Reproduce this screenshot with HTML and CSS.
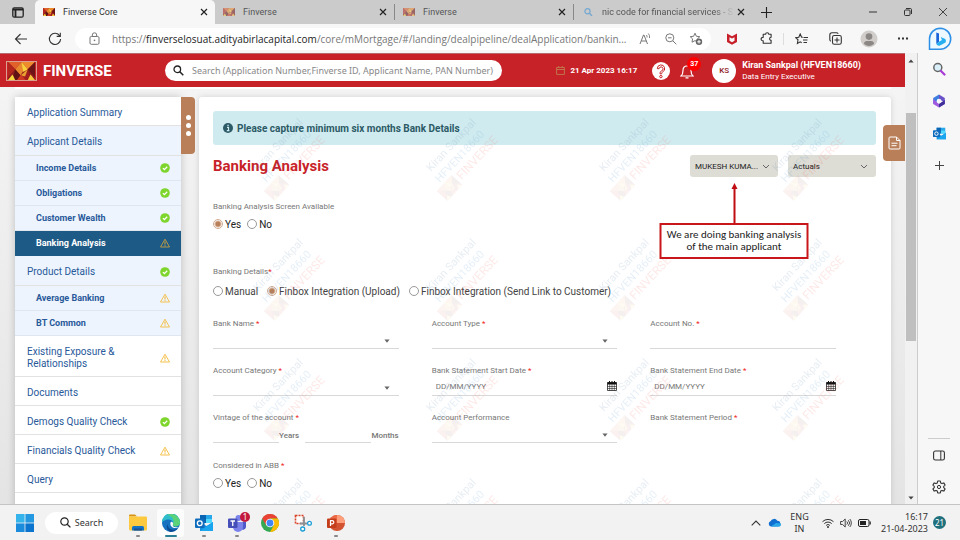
FILE: index.html
```html
<!DOCTYPE html>
<html lang="en">
<head>
<meta charset="utf-8">
<meta name="viewport" content="width=device-width, initial-scale=1">
<title>Finverse Core</title>
<link rel="stylesheet" href="styles.css">
</head>
<body>
<svg class="defs" width="0" height="0" aria-hidden="true">
  <defs>
    <symbol id="logo" viewBox="0 0 30 20">
      <rect width="30" height="20" fill="#8e1b1c"/>
      <path d="M0 0h15l-7 8z" fill="#e2602a"/><path d="M15 0h15l-8 8z" fill="#ef8a2c"/>
      <path d="M0 0l8 8-8 9z" fill="#b3261e"/><path d="M30 0l-8 8 8 9z" fill="#6d1416"/>
      <path d="M8 8l7-8 3 8-4 7z" fill="#e8892f"/><path d="M15 0l7 8-5 3z" fill="#f7d23c"/>
      <path d="M8 8l6 7-4 5H5z" fill="#5f1113"/><path d="M22 8l-7 7 4 5h6z" fill="#a31d1f"/>
      <path d="M14 15l8-7-3 8z" fill="#e8a02e"/><path d="M10 20l4.500-6 5 6z" fill="#cf3b22"/>
      <path d="M0 20l5-6 3 6z" fill="#f6d63d"/><path d="M30 20l-5-6-3 6z" fill="#f6c83d"/>
    </symbol>
    <symbol id="ok" viewBox="0 0 10 10"><circle cx="5" cy="5" r="4.800" fill="#7ed52c"/><path d="M2.900 5.100l1.500 1.500 2.800-2.900" fill="none" stroke="#fff" stroke-width="1.300"/></symbol>
    <symbol id="warn" viewBox="0 0 10 10"><path d="M5 1.200L9.500 9H.5z" fill="none" stroke="currentColor" stroke-width=".9" stroke-linejoin="round"/><path d="M5 3.400v3.200M5 7.200v1.100" stroke="currentColor" stroke-width="1.100"/></symbol>
    <symbol id="x" viewBox="0 0 8 8"><path d="M1 1l6 6M7 1L1 7" stroke="currentColor" stroke-width="1.200"/></symbol>
    <symbol id="caret" viewBox="0 0 6 4"><path d="M.4.400h5.200L3 3.800z" fill="#666"/></symbol>
    <symbol id="chev" viewBox="0 0 8 5"><path d="M1 1l3 3 3-3" fill="none" stroke="#666" stroke-width="1"/></symbol>
    <symbol id="cal" viewBox="0 0 10 10"><path d="M.5 1.500h9V9.500h-9z" fill="#fff" stroke="#222" stroke-width=".8"/><path d="M.5 1.300h9v2.200h-9z" fill="#111"/><path d="M2.500 0v2M5 0v2M7.500 0v2" stroke="#111" stroke-width="1"/><path d="M.5 5.500h9M.5 7.500h9M2.700 3v6.500M5 3v6.500M7.300 3v6.500" stroke="#222" stroke-width=".6"/></symbol>
    <symbol id="outlook" viewBox="0 0 18 18"><path d="M5 1h12v8H5z" fill="#28a8ea"/><path d="M5 1h6v8H5z" fill="#0a64b4"/><path d="M11 5h6v4h-6z" fill="#50d9ff"/><path d="M5 8l6.500 4L18 8v9H5z" fill="#1490df"/><path d="M5 17l13-9v9z" fill="#1aa6ee"/><rect y="4.500" width="9.500" height="9.500" rx="1" fill="#0f6cbd"/><circle cx="4.750" cy="9.250" r="2.400" fill="none" stroke="#fff" stroke-width="1.300"/></symbol>
  </defs>
</svg>

<header class="tabbar">
  <button class="tab-actions" aria-label="Tab actions"><svg width="12" height="11" viewBox="0 0 12 11"><rect x=".8" y=".8" width="10.400" height="9.400" rx="1.500" fill="none" stroke="#222" stroke-width="1.300"/><path d="M1 2.500h10M3.500 3v7" stroke="#222" stroke-width="1.800"/></svg></button>
  <div class="tab tab-active"><svg class="fav"><use href="#logo"/></svg><span class="tab-title">Finverse Core</span><button class="tab-close" aria-label="Close tab"><svg><use href="#x"/></svg></button></div>
  <div class="tab"><svg class="fav"><use href="#logo"/></svg><span class="tab-title">Finverse</span><button class="tab-close" aria-label="Close tab"><svg><use href="#x"/></svg></button></div>
  <div class="tab tab-sep"><svg class="fav"><use href="#logo"/></svg><span class="tab-title">Finverse</span><button class="tab-close" aria-label="Close tab"><svg><use href="#x"/></svg></button></div>
  <div class="tab tab-sep"><svg class="fav" viewBox="0 0 12 8"><circle cx="5.500" cy="3.300" r="2.600" fill="none" stroke="#2b8bd8" stroke-width="1.200"/><path d="M7.500 5.300L10 8" stroke="#2b8bd8" stroke-width="1.400"/></svg><span class="tab-title tab-fade">nic code for financial services - S</span><button class="tab-close" aria-label="Close tab"><svg><use href="#x"/></svg></button></div>
  <button class="tab-new" aria-label="New tab"><svg width="11" height="11" viewBox="0 0 11 11"><path d="M5.500 0v11M0 5.500h11" stroke="#222" stroke-width="1.100"/></svg></button>
  <div class="window-buttons">
    <button aria-label="Minimize"><svg width="8" height="8" viewBox="0 0 8 8"><path d="M0 4h8" stroke="#333"/></svg></button>
    <button aria-label="Restore"><svg width="8" height="8" viewBox="0 0 8 8"><rect x=".5" y="2" width="5.500" height="5.500" rx="1" fill="none" stroke="#333"/><path d="M2 .5h4.300a1.200 1.200 0 0 1 1.200 1.200V6" fill="none" stroke="#333"/></svg></button>
    <button aria-label="Close window"><svg width="8" height="8" viewBox="0 0 8 8"><path d="M0 0l8 8M8 0L0 8" stroke="#333" stroke-width=".9"/></svg></button>
  </div>
</header>

<div class="toolbar">
  <button class="tool" aria-label="Back"><svg width="14" height="12" viewBox="0 0 14 12"><path d="M13 6H1.500M6.500 1l-5 5 5 5" fill="none" stroke="#333" stroke-width="1.100"/></svg></button>
  <button class="tool" aria-label="Refresh"><svg width="14" height="14" viewBox="0 0 14 14"><path d="M11.800 4A5.600 5.600 0 1 0 12.600 7M12.300.8v3.600H8.700" fill="none" stroke="#333" stroke-width="1.100"/></svg></button>
  <div class="address">
    <svg width="11" height="13" viewBox="0 0 11 13"><rect x="1" y="4.500" width="9" height="7.800" rx="1.300" fill="none" stroke="#777"/><path d="M3.300 4.500V3a2.200 2.200 0 0 1 4.400 0v1.500" fill="none" stroke="#777"/><circle cx="5.500" cy="8.400" r=".8" fill="#777"/></svg>
    <div class="url" role="textbox" contenteditable="true" spellcheck="false" aria-label="Address">https://<b>finverselosuat.adityabirlacapital.com</b>/core/mMortgage/#/landing/dealpipeline/dealApplication/bankin...</div>
    <button aria-label="Read aloud"><svg width="14" height="12" viewBox="0 0 14 12"><path d="M1 11L4.500 2h.5l3.500 9M2.300 8h5" fill="none" stroke="#777"/><path d="M8 4.500a3 3 0 0 0-.5-2.500M10.500 5a5 5 0 0 0-1.200-4.500" fill="none" stroke="#777" stroke-width=".9"/></svg></button>
    <button aria-label="Zoom out"><svg width="12" height="12" viewBox="0 0 12 12"><circle cx="4.800" cy="4.800" r="4" fill="none" stroke="#777"/><path d="M7.800 7.800l3.500 3.500M3 4.800h3.600" stroke="#777"/></svg></button>
    <button aria-label="Add to favorites"><svg width="14" height="14" viewBox="0 0 14 14"><path d="M6 1.200l1.400 3.100 3.400.4-2.500 2.200.6 3.300L6 8.600l-3 1.600.6-3.300L1.200 4.700l3.400-.4z" fill="none" stroke="#777"/><circle cx="10" cy="9.800" r="3.200" fill="#666"/><path d="M10 8v3.600M8.200 9.800h3.600" stroke="#fff"/></svg></button>
  </div>
  <button class="tool" aria-label="McAfee"><svg width="12" height="12" viewBox="0 0 12 12"><path d="M1 .5l5 2.800L11 .5v8.500L6 11.800 1 9z" fill="#c8202a"/><path d="M3.500 4.200L6 5.600l2.500-1.400v3.600L6 9.200 3.500 7.800z" fill="#f7f7f7"/></svg></button>
  <button class="tool" aria-label="Extensions"><svg width="13" height="13" viewBox="0 0 13 13"><path d="M4 2.300h1.600a1.600 1.600 0 0 1 3.200 0h2.300v3a1.500 1.500 0 0 0 0 3v3H3.200V8.700a1.700 1.700 0 1 1 0-3.300V2.300z" fill="none" stroke="#333" stroke-width="1.100" stroke-linejoin="round"/></svg></button>
  <span class="tool-divider"></span>
  <button class="tool" aria-label="Favorites"><svg width="13" height="12" viewBox="0 0 13 12"><path d="M7.800 4.300l-1.200-.1L5.200 1 3.800 4.200.7 4.600 3 6.800l-.6 3.600 2.800-1.600 1.500.9M8.500 4.500H13M8 7h4.500M8.500 9.500h3.500" fill="none" stroke="#333" stroke-width="1.100"/></svg></button>
  <button class="tool" aria-label="Collections"><svg width="13" height="13" viewBox="0 0 13 13"><rect x="3.500" y="3.500" width="8.800" height="8.800" rx="1.800" fill="none" stroke="#333" stroke-width="1.100"/><path d="M1.800 9.300A2 2 0 0 1 .8 7.500V3A2.200 2.200 0 0 1 3 .8h4.500a2 2 0 0 1 1.700 1M8 5.500v5M5.500 8h5" fill="none" stroke="#333" stroke-width="1.100"/></svg></button>
  <button class="tool" aria-label="Profile"><svg width="18" height="18" viewBox="0 0 18 18"><circle cx="9" cy="9" r="8.500" fill="#d0cdca"/><circle cx="9" cy="6.600" r="3.300" fill="#8a8785"/><path d="M4 14q0-3 3-3h4q3 0 3 3a8 8 0 0 1-10 0z" fill="#8a8785"/></svg></button>
  <button class="tool" aria-label="Settings and more"><svg width="10" height="3" viewBox="0 0 10 3"><path d="M0 .6h2v2H0zM4 .6h2v2H4zM8 .6h2v2H8z" fill="#333"/></svg></button>
  <button class="tool tool-bing" aria-label="Bing"><svg width="24" height="24" viewBox="0 0 24 24"><path d="M12.300 1.200A10.500 10.500 0 1 1 12 22.300H1.500V12A10.800 10.800 0 0 1 12.300 1.200z" fill="#eef8ff" stroke="#2d8fe6" stroke-width="1.500"/><path d="M8.300 5.500l2.700 1v8.200l-2.700 2.300z" fill="#1b63d8"/><path d="M8.300 17l2.700-2.300 3-1.700-1.300-2.900 4.600 2a3 3 0 0 1 .2 3.400l-6 3.200a3 3 0 0 1-3.200-1.700z" fill="#25aef0"/></svg></button>
</div>

<div class="middle">
  <div class="app">
    <header class="app-header">
      <a class="brand" href="#"><svg class="brand-logo"><use href="#logo"/></svg>FINVERSE</a>
      <label class="search"><svg width="11" height="11" viewBox="0 0 11 11"><circle cx="4.300" cy="4.300" r="3.300" fill="none" stroke="#222" stroke-width="1.300"/><path d="M6.800 6.800L10.300 10.300" stroke="#222" stroke-width="1.500"/></svg><input type="text" aria-label="Search" placeholder="Search (Application Number,Finverse ID, Applicant Name, PAN Number)"></label>
      <div class="date"><svg width="9" height="9" viewBox="0 0 9 9"><path d="M.6 1.500h7.800v6.900H.6zM.6 3.500h7.800M2.700 0v2M6.300 0v2" fill="none" stroke="#c0744c" stroke-width="1"/></svg><time>21 Apr 2023 16:17</time></div>
      <button class="help" aria-label="Help"><svg width="18" height="18" viewBox="0 0 18 18"><circle cx="9" cy="9" r="9" fill="#fff"/><path d="M5.300 6.700a3.700 3.700 0 1 1 5.200 3.300c-.8.500-.8.900-.8 1.800H8c0-1.500.3-2.200 1.400-2.900a2 2 0 1 0-2.300-2.200z" fill="#fff" stroke="#c82229" stroke-width="1"/><circle cx="8.900" cy="14.600" r="1.200" fill="#fff" stroke="#c82229"/></svg></button>
      <button class="bell" aria-label="Notifications"><svg width="14" height="16" viewBox="0 0 14 16"><path d="M1 13h12c-1.500-1.300-2-2.500-2-5.500C11 4.500 9.500 3 7 3S3 4.500 3 7.500C3 10.500 2.500 11.700 1 13zM5.500 14.800h3" fill="none" stroke="#fff" stroke-width="1.200"/></svg><span class="bell-count">37</span></button>
      <div class="avatar">KS</div>
      <div class="user"><span class="user-name">Kiran Sankpal (HFVEN18660)</span><span class="user-role">Data Entry Executive</span></div>
    </header>

    <div class="app-body">
      <nav class="steps" aria-label="Application sections">
        <a class="step" href="#">Application Summary</a>
        <a class="step step-tint" href="#">Applicant Details</a>
        <div class="substeps">
          <a class="substep" href="#">Income Details<svg><use href="#ok"/></svg></a>
          <a class="substep" href="#">Obligations<svg><use href="#ok"/></svg></a>
          <a class="substep" href="#">Customer Wealth<svg><use href="#ok"/></svg></a>
          <a class="substep substep-active" href="#" aria-current="page">Banking Analysis<svg><use href="#warn"/></svg></a>
        </div>
        <a class="step step-tint" href="#">Product Details<svg><use href="#ok"/></svg></a>
        <div class="substeps">
          <a class="substep" href="#">Average Banking<svg><use href="#warn"/></svg></a>
          <a class="substep" href="#">BT Common<svg><use href="#warn"/></svg></a>
        </div>
        <a class="step step-tall" href="#"><span>Existing Exposure &amp;<br>Relationships</span><svg><use href="#warn"/></svg></a>
        <a class="step" href="#">Documents</a>
        <a class="step" href="#">Demogs Quality Check<svg><use href="#ok"/></svg></a>
        <a class="step" href="#">Financials Quality Check<svg><use href="#warn"/></svg></a>
        <a class="step" href="#">Query</a>
        <span class="step"></span>
      </nav>
      <button class="steps-toggle" aria-label="Toggle sections"><i></i><i></i><i></i></button>

      <main class="panel">
        <p class="notice"><svg width="10" height="10" viewBox="0 0 10 10"><circle cx="5" cy="5" r="5" fill="#2c5a66"/><path d="M4 4.300h1.500V7.500M3.800 7.600h2.600M4.400 2.400h1.300" stroke="#d0ebef" stroke-width="1.200" fill="none"/></svg>Please capture minimum six months Bank Details</p>
        <div class="panel-head">
          <h1>Banking Analysis</h1>
          <div class="pill"><select aria-label="Applicant"><option>MUKESH KUMA...</option></select><svg><use href="#chev"/></svg>
            <div class="callout"><svg width="10" height="40" viewBox="0 0 10 40"><path d="M5 4v36" stroke="#c00d12" stroke-width="2"/><path d="M5 0l3 6H2z" fill="#c00d12"/></svg><p>We are doing banking analysis<br>of the main applicant</p></div>
          </div>
          <div class="pill"><select aria-label="Figures"><option>Actuals</option></select><svg><use href="#chev"/></svg></div>
        </div>

        <form>
          <fieldset class="choice">
            <legend>Banking Analysis Screen Available</legend>
            <div class="options"><label class="dark"><input type="radio" name="screen" checked>Yes</label><label class="dark"><input type="radio" name="screen">No</label></div>
          </fieldset>
          <fieldset class="choice choice-wide">
            <legend>Banking Details<em>*</em></legend>
            <div class="options"><label><input type="radio" name="details">Manual</label><label><input type="radio" name="details" checked>Finbox Integration (Upload)</label><label><input type="radio" name="details">Finbox Integration (Send Link to Customer)</label></div>
          </fieldset>
          <div class="fields">
            <div class="field"><label for="bank">Bank Name <em>*</em></label><div class="control"><select id="bank"><option></option></select><svg class="caret"><use href="#caret"/></svg></div></div>
            <div class="field"><label for="type">Account Type <em>*</em></label><div class="control"><select id="type"><option></option></select><svg class="caret"><use href="#caret"/></svg></div></div>
            <div class="field"><label for="number">Account No. <em>*</em></label><div class="control"><input id="number" type="text"></div></div>
            <div class="field"><label for="category">Account Category <em>*</em></label><div class="control"><select id="category"><option></option></select><svg class="caret"><use href="#caret"/></svg></div></div>
            <div class="field"><label for="start">Bank Statement Start Date <em>*</em></label><div class="control"><input id="start" type="text" placeholder="DD/MM/YYYY"><svg class="cal"><use href="#cal"/></svg></div></div>
            <div class="field"><label for="end">Bank Statement End Date <em>*</em></label><div class="control"><input id="end" type="text" placeholder="DD/MM/YYYY"><svg class="cal"><use href="#cal"/></svg></div></div>
            <div class="field"><label for="years">Vintage of the account <em>*</em></label><div class="pair"><input id="years" type="text"><span>Years</span><input id="months" type="text" aria-label="Months"><span>Months</span></div></div>
            <div class="field"><label for="performance">Account Performance</label><div class="control"><select id="performance"><option></option></select><svg class="caret"><use href="#caret"/></svg></div></div>
            <div class="field"><span>Bank Statement Period <em>*</em></span></div>
          </div>
          <fieldset class="choice choice-last">
            <legend>Considered in ABB <em>*</em></legend>
            <div class="options"><label class="dark"><input type="radio" name="abb">Yes</label><label class="dark"><input type="radio" name="abb">No</label></div>
          </fieldset>
        </form>
        <svg class="watermark" width="100%" height="100%" aria-hidden="true">
          <defs>
            <pattern id="mark" x="38" y="14" width="173" height="120" patternUnits="userSpaceOnUse">
              <g transform="translate(21 61) rotate(-47)" font-size="11">
                <text fill="#3d6f9f">Kiran Sankpal</text>
                <text x="-2" y="14" fill="#2c7fc4">HFVEN18660</text>
                <use href="#logo" x="-10" y="17" width="22" height="15" opacity=".5"/>
                <text x="15" y="28" font-size="12" fill="#ef4a3c">FINVERSE</text>
              </g>
            </pattern>
          </defs>
          <rect width="100%" height="100%" fill="url(#mark)"/>
        </svg>
      </main>
      <button class="notes" aria-label="Notes"><svg width="13" height="14" viewBox="0 0 13 14"><path d="M2 1h6.500L12 4.500V12a1 1 0 0 1-1 1H2a1 1 0 0 1-1-1V2a1 1 0 0 1 1-1zM8.500 1v3.500H12M3.500 7.200h6M3.500 9.700h5" fill="none" stroke="#fff" stroke-width="1"/></svg></button>
    </div>
  </div>

  <div class="scrollbar" aria-hidden="true"><svg width="6" height="4" viewBox="0 0 6 4"><path d="M3 .5L5.600 3.500H.4z" fill="#444"/></svg><span class="thumb"></span><svg width="6" height="4" viewBox="0 0 6 4"><path d="M3 3.500L5.600.5H.4z" fill="#444"/></svg></div>

  <aside class="edgebar">
    <button aria-label="Search"><svg width="14" height="14" viewBox="0 0 14 14"><circle cx="5.800" cy="5.500" r="4" fill="#d9f0fb" stroke="#666" stroke-width="1.500"/><path d="M9 9l3.500 3.500" stroke="#a63bd6" stroke-width="2.200" stroke-linecap="round"/></svg></button>
    <button aria-label="Microsoft 365"><svg width="14" height="14" viewBox="0 0 14 14"><path d="M7 .5L1.200 4v6L7 6z" fill="#3f7ee0"/><path d="M7 .5L12.800 4v4.500L7 5z" fill="#6a52c9"/><path d="M1.200 10L7 13.500l5.800-3.500V6.500L7 10 1.200 5z" fill="#a05be0"/><path d="M12.800 6v4L7 13.500V10z" fill="#40309a"/><circle cx="7" cy="7" r="2.300" fill="#f7f7f7"/></svg></button>
    <button aria-label="Outlook"><svg width="13" height="13"><use href="#outlook"/></svg></button>
    <button aria-label="Add"><svg width="9" height="9" viewBox="0 0 9 9"><path d="M4.500 0v9M0 4.500h9" stroke="#444"/></svg></button>
    <span class="edgebar-space"></span>
    <button aria-label="Hide sidebar"><svg width="12" height="11" viewBox="0 0 12 11"><rect x=".6" y="1" width="10.800" height="9" rx="1.800" fill="none" stroke="#333" stroke-width="1.100"/><path d="M7.800 1v9" stroke="#333"/></svg></button>
    <button aria-label="Settings"><svg width="14" height="14" viewBox="0 0 14 14"><path d="M5.700 1h2.600l.4 1.900 1.300.7 1.800-.7 1.300 2.200-1.400 1.300v1.200l1.400 1.300-1.300 2.200-1.800-.7-1.300.7L8.300 13H5.700l-.4-1.900-1.300-.7-1.800.7L.9 8.900l1.400-1.300V6.400L.9 5.100l1.300-2.200 1.800.7 1.300-.7z" fill="none" stroke="#333" stroke-width="1.100" stroke-linejoin="round"/><circle cx="7" cy="7" r="1.600" fill="none" stroke="#333"/></svg></button>
  </aside>
</div>

<footer class="taskbar">
  <button class="start" aria-label="Start"><svg width="18" height="18" viewBox="0 0 18 18"><path d="M0 0h8.600v8.600H0z" fill="#35b4ec"/><path d="M9.400 0H18v8.600H9.400z" fill="#2499e2"/><path d="M0 9.400h8.600V18H0z" fill="#1b8bdc"/><path d="M9.400 9.400H18V18H9.400z" fill="#0b74cf"/></svg></button>
  <button class="task-search"><svg width="11" height="11" viewBox="0 0 11 11"><circle cx="4.500" cy="4.500" r="3.700" fill="none" stroke="#222" stroke-width="1.200"/><path d="M7.200 7.200l3.200 3.200" stroke="#222" stroke-width="1.300"/></svg>Search</button>
  <button class="task running" aria-label="File Explorer"><svg width="18" height="17" viewBox="0 0 18 17"><path d="M0 1.500Q0 .5 1 .5h5l2 2H0z" fill="#d99312"/><path d="M0 2.500h17q1 0 1 1V15q0 1.500-1.500 1.500h-15Q0 16.500 0 15z" fill="#fcc93f"/><path d="M3 16.500v-3q0-1.500 1.500-1.500h9q1.500 0 1.500 1.500v3z" fill="#1272c4"/><path d="M5 14.500h8v2H5z" fill="#1a4f91"/></svg></button>
  <button class="task active" aria-label="Edge"><svg width="18" height="18" viewBox="0 0 18 18"><circle cx="9" cy="9" r="9" fill="#1672c0"/><path d="M0 8.500A9 9 0 0 1 18 8c.3 3-2 4.500-4.500 4.500-2 0-3.300-.8-2.500-2.200C12 7 8.500 5 5.500 5.500 2.800 6 .8 7 0 8.500z" fill="#2fbccb"/><path d="M9 0a9 9 0 0 1 9 8c.3 3-2 4.500-4.500 4.500-2 0-3.300-.8-2.500-2.200C13 5 10 2 5 1z" fill="#5bd278"/><path d="M5.500 10c0 4 4 7.500 10 4.700A9 9 0 0 1 9 18c-3-.5-5.500-4-3.500-8z" fill="#0c4a94"/><path d="M8.800 8c-1 1.500-.6 5 3.200 6 2.300.4 4-.4 4.600-1-1.500.4-7 .7-5.600-2.700.6-1.300-1-3-2.200-2.300z" fill="#fafafa"/></svg></button>
  <button class="task running" aria-label="Outlook"><svg width="18" height="18"><use href="#outlook"/></svg></button>
  <button class="task running" aria-label="Teams"><svg width="18" height="18" viewBox="0 0 18 18"><circle cx="15.500" cy="5.500" r="2" fill="#5059c9"/><circle cx="10.500" cy="4" r="3" fill="#7b83eb"/><path d="M12 8h6v5a3 3 0 0 1-5 2z" fill="#5059c9"/><path d="M5 8h10v5a5 5 0 0 1-10 0z" fill="#7b83eb"/><rect y="4.500" width="9.500" height="9.500" rx="1" fill="#464eb8"/><path d="M2.500 7h4.500M4.750 7v5" stroke="#fff" stroke-width="1.300"/></svg><span class="task-badge">1</span></button>
  <button class="task" aria-label="Chrome"><svg width="18" height="18" viewBox="0 0 18 18"><circle cx="9" cy="9" r="9" fill="#34a853"/><path d="M1.200 4.500A9 9 0 0 1 16.800 4.500H9L5.100 11.200z" fill="#ea4335"/><path d="M16.800 4.500A9 9 0 0 1 9 18l3.900-6.800L9 4.500z" fill="#fbbc04"/><circle cx="9" cy="9" r="4.300" fill="#fff"/><circle cx="9" cy="9" r="3.400" fill="#4285f4"/></svg></button>
  <button class="task" aria-label="Snipping Tool"><svg width="18" height="18" viewBox="0 0 18 18"><rect x="1.500" y="1.500" width="8" height="8" fill="#fff" stroke="#d8432a" stroke-width="1.600" stroke-dasharray="2 1"/><path d="M10 3v9M6 9.500h7" stroke="#8b8f94" stroke-width="1.800"/><circle cx="8.700" cy="15" r="2" fill="#fff" stroke="#1c9ed8" stroke-width="1.300"/><circle cx="15.500" cy="9.300" r="1.900" fill="#fff" stroke="#1c9ed8" stroke-width="1.300"/></svg></button>
  <button class="task running" aria-label="PowerPoint"><svg width="18" height="18" viewBox="0 0 18 18"><circle cx="10" cy="9" r="8" fill="#d35230"/><path d="M10 1a8 8 0 0 1 8 8h-8z" fill="#ff9e7a"/><path d="M2 9h8V1a8 8 0 0 0-8 8z" fill="#ed6c47"/><rect y="4.500" width="9.500" height="9.500" rx="1" fill="#c43e1c"/><path d="M3.500 12V6.700h1.700a1.500 1.500 0 0 1 0 3.200H3.500" fill="none" stroke="#fff" stroke-width="1.200"/></svg></button>
  <span class="task-space"></span>
  <button class="tray" aria-label="Hidden icons"><svg width="10" height="6" viewBox="0 0 10 6"><path d="M.7 5.300L5 1l4.300 4.300" fill="none" stroke="#333" stroke-width="1.100"/></svg></button>
  <button class="tray" aria-label="OneDrive"><svg width="13" height="9" viewBox="0 0 13 9"><path d="M3 8.500A2.700 2.700 0 0 1 2.500 3.300 3.800 3.800 0 0 1 9.300 2.700 3 3 0 0 1 10.500 8.500z" fill="#0f6fd0"/><path d="M3 8.500L8 5l4.700.5a2 2 0 0 1-2.200 3z" fill="#28a8ea"/></svg></button>
  <button class="lang">ENG<br>IN</button>
  <button class="tray" aria-label="Wi-Fi"><svg width="12" height="10" viewBox="0 0 12 10"><path d="M.5 3.700a7.800 7.800 0 0 1 11 0M2.300 5.600a5.200 5.200 0 0 1 7.400 0M4.100 7.400a2.700 2.700 0 0 1 3.800 0" fill="none" stroke="#333"/><circle cx="6" cy="8.900" r="1" fill="#333"/></svg></button>
  <button class="tray" aria-label="Volume"><svg width="12" height="10" viewBox="0 0 12 10"><path d="M.6 3.500h2L5.200 1v8L2.600 6.500h-2zM6.800 3.500a2 2 0 0 1 0 3M8.300 2.200a4 4 0 0 1 0 5.600M9.800 1a6 6 0 0 1 0 8" fill="none" stroke="#333" stroke-width=".9"/></svg></button>
  <button class="tray" aria-label="Battery"><svg width="13" height="8" viewBox="0 0 13 8"><rect x=".5" y=".5" width="10.500" height="7" rx="1.500" fill="none" stroke="#222"/><path d="M2 2h6v4H2z" fill="#222"/><path d="M12.200 2.500v3" stroke="#222" stroke-width="1.200"/></svg></button>
  <button class="clock">16:17<br>21-04-2023</button>
  <span class="clock-badge">21</span>
</footer>
</body>
</html>
```
FILE: styles.css
```css
* { box-sizing: border-box; }

:root {
  --ui: "Noto Sans", "Open Sans", sans-serif;
  --app: Roboto, "Liberation Sans", sans-serif;
  --red: #c82229;
  --brown: #b97f58;
  --navy: #28599a;
}

body {
  margin: 0;
  height: 100vh;
  display: flex;
  flex-direction: column;
  overflow: hidden;
  font-family: var(--ui);
  font-size: 10px;
  color: #333;
}

button { font: inherit; color: inherit; background: none; border: 0; padding: 0; display: flex; align-items: center; justify-content: center; }
a { color: inherit; text-decoration: none; }
p, h1, fieldset, legend { margin: 0; padding: 0; border: 0; }
svg { display: block; flex: none; }
.defs { position: absolute; }

/* Browser tabs */
.tabbar { flex: none; height: 24px; display: flex; background: #cbcbcb; }
.tab-actions { width: 35px; }
.tab { width: 179px; display: flex; align-items: center; gap: 8px; padding: 0 6px 0 8px; color: #555; }
.tab .fav { width: 12px; height: 8px; opacity: .55; }
.tab-sep { border-left: 1px solid; border-image: linear-gradient(transparent 20%, #888 20%, #888 80%, transparent 80%) 1; }
.tab-active { width: 180px; background: #f7f7f7; border-radius: 5px 5px 0 0; color: #333; }
.tab-active .fav { opacity: 1; }
.tab-title { flex: 1; min-width: 0; white-space: nowrap; font-family: var(--app); font-size: 9px; }
.tab-fade { margin-right: -6px; mask-image: linear-gradient(90deg, #000 85%, transparent); }
.tab-close { flex: none; width: 10px; height: 10px; color: #222; }
.tab-close svg { width: 8px; height: 8px; }
.tab-new { width: 28px; }
.window-buttons { margin-left: auto; display: flex; }
.window-buttons button { width: 35px; }

/* Browser toolbar */
.toolbar { flex: none; height: 29px; display: flex; align-items: center; padding-left: 4px; background: #f7f7f7; }
.tool { flex: none; width: 34px; height: 28px; }
.tool-bing { width: 40px; }
.tool-divider { width: 1px; height: 12px; background: #ddd; }
.address { flex: 1; min-width: 0; height: 22px; margin: 0 4px 0 3px; padding: 0 8px 0 14px; display: flex; align-items: center; gap: 12px; border-radius: 11px; background: #fff; }
.url { flex: 1; min-width: 0; white-space: nowrap; font: 10px/20px "Open Sans", sans-serif; color: #777; outline: 0; }
.url b { font-weight: 400; color: #222; }

.middle { flex: 1; min-height: 0; display: flex; }
.app { flex: 1; min-width: 0; display: flex; flex-direction: column; font-family: var(--app); }

/* Application header */
.app-header { flex: none; height: 34px; display: flex; align-items: center; padding: 0 45px 0 6px; background: var(--red); color: #fff; border-top: 1px solid #b56a6d; }
.brand { width: 159px; display: flex; align-items: center; gap: 6px; font-size: 15px; font-weight: 700; }
.brand-logo { width: 31px; height: 20px; border: 1px solid #d9a08f; }
.search { width: 337px; height: 21px; padding: 0 2px 0 8px; display: flex; align-items: center; gap: 8px; border-radius: 11px; background: #fff; }
.search input { flex: 1; min-width: 0; padding: 0; border: 0; outline: 0; background: none; font: 9px "Noto Sans", sans-serif; }
.search input::placeholder { color: #888; }
.date { margin-left: auto; display: flex; align-items: center; gap: 5px; font-size: 8px; font-weight: 700; }
.help { margin-left: 15px; }
.bell { position: relative; margin-left: 10px; }
.bell-count { position: absolute; left: 7px; top: -6px; width: 14px; height: 14px; border-radius: 7px; background: #f00; font-size: 7px; line-height: 14px; font-weight: 700; text-align: center; }
.avatar { width: 24px; height: 24px; margin: 0 6px 0 18px; border-radius: 12px; background: #fff; color: #8f2027; font-size: 8px; font-weight: 500; line-height: 24px; text-align: center; }
.user { display: flex; flex-direction: column; gap: 1px; margin-right: -1px; }
.user-name { font-size: 9px; line-height: 11px; font-weight: 700; }
.user-role { font-size: 8px; line-height: 10px; font-weight: 400; }

/* Application body */
.app-body { position: relative; flex: 1; min-height: 0; display: flex; align-items: flex-start; padding: 10px 14px 0 15px; overflow: hidden; background: linear-gradient(#f4f4f4, #e4e4e4); }
.app-body::before { content: ""; position: absolute; inset: 0 14px auto 15px; height: 2px; background: #fff; }
.steps { flex: none; width: 166px; background: #fff; color: var(--navy); box-shadow: 0 0 8px #0003; }
.step { display: flex; align-items: center; justify-content: space-between; min-height: 29px; padding: 4px 11px 0 12px; border-bottom: 1px solid #e2e2e2; font-size: 10px; line-height: 12px; }
.step-tint { min-height: 30px; padding-top: 2px; background: #edf4fd; }
.step-tall { min-height: 41px; }
.substep { display: flex; align-items: center; justify-content: space-between; height: 25px; padding: 0 11px 0 21px; border-bottom: 1px solid #dfe6ee; background: #edf4fd; font-size: 9px; font-weight: 700; }
.substep-active { border-color: #1d5a86; background: #1d5a86; color: #fff; }
.steps svg { width: 10px; height: 10px; color: #f5bb3c; }
.substep-active svg { color: #c9a040; }
.steps-toggle { flex: none; width: 14px; height: 57px; flex-direction: column; gap: 3px; border-radius: 0 4px 4px 0; background: var(--brown); }
.steps-toggle i { width: 5px; height: 5px; border-radius: 3px; background: #fff; }

.panel { position: relative; flex: 1; min-height: 100%; margin-left: 4px; padding: 14px 15px 20px 14px; border-radius: 3px 3px 0 0; background: #fff; box-shadow: 0 0 6px #0002; }
.notice { display: flex; align-items: center; gap: 4px; height: 34px; padding: 0 10px; border-radius: 3px; background: #d0ebef; color: #2c5a66; font-size: 10px; font-weight: 700; }
.panel-head { display: flex; align-items: center; gap: 10px; height: 22px; margin: 10px 0 24px; }
.panel-head h1 { flex: 1; color: var(--red); font-size: 15px; line-height: 20px; font-weight: 700; }
.pill { position: relative; width: 88px; height: 22px; display: grid; align-items: center; border-radius: 3px; background: #dddcd5; }
.pill select, .control select, .control input { grid-area: 1 / 1; width: 100%; height: 100%; border: 0; outline: 0; appearance: none; background: none; font: 8px var(--app); color: #555; }
.pill select { padding: 0 5px; color: #222; }
.pill > svg { grid-area: 1 / 1; justify-self: end; width: 8px; height: 5px; margin-right: 8px; pointer-events: none; }
.callout { position: absolute; z-index: 2; top: 28px; left: 50%; width: 149px; transform: translateX(-50%); display: flex; flex-direction: column; align-items: center; }
.callout p { width: 100%; padding: 4px 0; border: 2px solid #c8161b; background: #fff; color: #222; font: 11px/12px Carlito, Lato, sans-serif; text-align: center; white-space: nowrap; }

legend, .field > label, .field > span { display: block; font-size: 8px; line-height: 12px; color: #777; }
em { font-style: normal; color: #f02020; }
.options { display: flex; gap: 6px; margin-top: 5px; }
.options label { display: flex; align-items: center; gap: 2px; height: 12px; font-size: 10px; color: #444; }
.options label.dark { color: #222; }
.options input { width: 10px; height: 10px; margin: 0; appearance: none; border: 1px solid #999; border-radius: 5px; background: #fff; }
.options input:checked { border-color: #d3ab92; background: radial-gradient(circle, var(--brown) 2px, #fff 4px); }
.choice { margin-bottom: 36px; }
.choice-wide { margin-bottom: 21px; }
.choice-wide .options { margin-top: 7px; gap: 9px; }
.choice-last { margin: 17px 0 0; }

.fields { display: grid; grid-template-columns: repeat(3, 1fr); gap: 16px 33px; padding-right: 40px; }
.control { display: grid; align-items: center; height: 19px; border-bottom: 1px solid #d8d8d8; }
.control input { padding: 0 4px; }
.control input::placeholder { color: #777; }
.control svg { grid-area: 1 / 1; justify-self: end; pointer-events: none; }
.caret { width: 6px; height: 4px; margin: 4px 9px 0 0; }
.cal { width: 10px; height: 10px; }
.pair { display: flex; height: 19px; font-size: 8px; font-weight: 500; line-height: 24px; color: #777; }
.pair input { width: 66px; padding: 0; border: 0; border-bottom: 1px solid #d8d8d8; background: none; outline: 0; }
.pair span { flex: 1; }

.watermark { position: absolute; inset: 0; opacity: .12; pointer-events: none; font-family: var(--app); }
.notes { position: absolute; right: 0; top: 38px; width: 22px; height: 36px; border-radius: 4px 0 0 4px; background: var(--brown); }

.scrollbar { flex: none; width: 12px; display: flex; flex-direction: column; align-items: center; padding: 6px 0 4px; background: #f1f1f1; }
.thumb { width: 10px; height: 228px; margin: 50px 0 auto; background: #bfbfbf; }

/* Edge sidebar */
.edgebar { flex: none; width: 43px; display: flex; flex-direction: column; padding-bottom: 1px; border-left: 1px solid #ccc; background: #f7f7f7; }
.edgebar button { height: 32px; }
.edgebar-space { flex: 1; margin: 0 10px; border-bottom: 1px solid #ccc; }

/* Taskbar */
.taskbar { flex: none; height: 36px; display: flex; align-items: center; padding-left: 16px; border-top: 1px solid #c4c4c4; background: #f2f2f2; font-size: 9px; line-height: 12px; }
.start { margin-right: 11px; }
.task-search { width: 73px; height: 22px; margin-right: 3px; gap: 4px; border-radius: 11px; background: #fff; }
.task { position: relative; width: 33px; height: 28px; }
.active { width: 27px; margin: 0 3px; border-radius: 3px; background: #fcfcfc; }
.running::after, .active::after { content: ""; position: absolute; bottom: 0; left: 50%; width: 4px; height: 2px; margin-left: -2px; border-radius: 1px; background: #888; }
.active::after { width: 12px; margin-left: -6px; background: #2a7f96; }
.task-badge { position: absolute; top: 3px; right: 3px; width: 10px; height: 10px; border-radius: 5px; background: #c4193d; color: #fff; font-size: 8px; line-height: 10px; }
.task-space { flex: 1; }
.tray { width: 18px; height: 24px; }
.lang { width: 36px; padding-right: 3px; text-align: center; }
.clock { width: 55px; justify-content: flex-end; text-align: right; }
.clock-badge { width: 13px; height: 13px; margin: 0 14px 0 5px; border-radius: 7px; background: #1f6f7c; color: #fff; font-size: 8px; line-height: 13px; text-align: center; }
```
